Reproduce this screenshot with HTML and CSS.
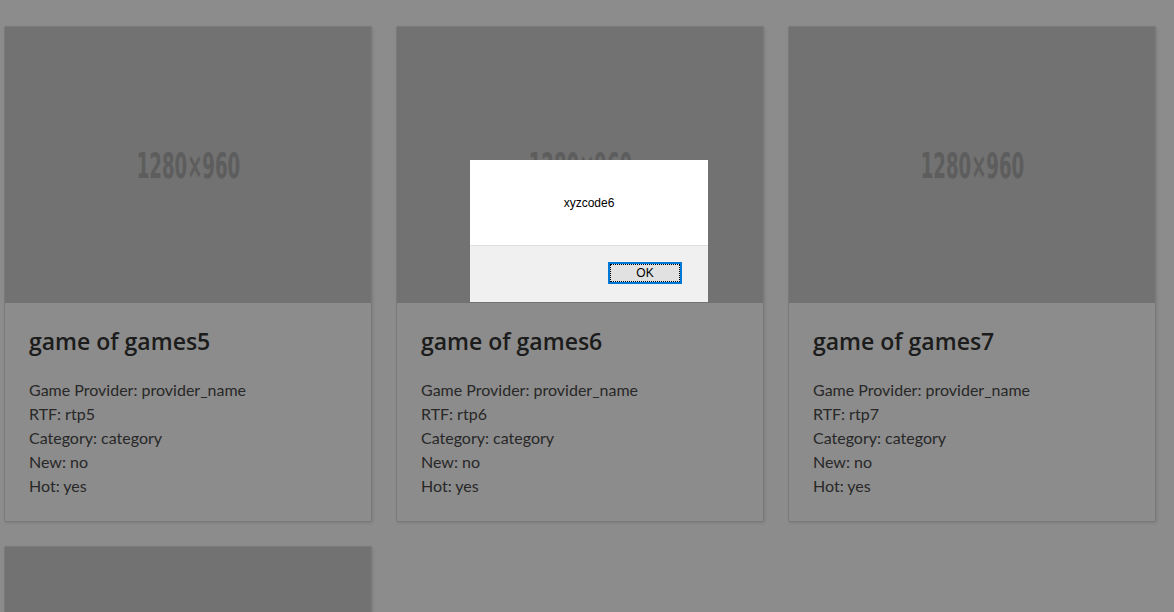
FILE: index.html
```html
<!DOCTYPE html>
<html>
<head>
<meta charset="utf-8">
<link rel="stylesheet" href="styles.css">
</head>
<body>
<div class="grid">
  <div class="card">
    <div class="thumb"><span>1280×960</span></div>
    <div class="body">
      <h5 class="title">game of games5</h5>
      <p>Game Provider: provider_name</p>
      <p>RTF: rtp5</p>
      <p>Category: category</p>
      <p>New: no</p>
      <p>Hot: yes</p>
    </div>
  </div>
  <div class="card">
    <div class="thumb"><span>1280×960</span></div>
    <div class="body">
      <h5 class="title">game of games6</h5>
      <p>Game Provider: provider_name</p>
      <p>RTF: rtp6</p>
      <p>Category: category</p>
      <p>New: no</p>
      <p>Hot: yes</p>
    </div>
  </div>
  <div class="card">
    <div class="thumb"><span>1280×960</span></div>
    <div class="body">
      <h5 class="title">game of games7</h5>
      <p>Game Provider: provider_name</p>
      <p>RTF: rtp7</p>
      <p>Category: category</p>
      <p>New: no</p>
      <p>Hot: yes</p>
    </div>
  </div>
  <div class="card">
    <div class="thumb"></div>
  </div>
</div>
<div class="overlay">
  <div class="dialog">
    <div class="msg">xyzcode6</div>
    <div class="foot"><button class="ok"><span>OK</span></button></div>
  </div>
</div>
</body>
</html>
```
FILE: styles.css
```css
html, body { margin: 0; padding: 0; background: #fff; overflow: hidden; height: 612px; }
body { font-family: Lato, "Open Sans", sans-serif; color: #212529; }
.grid {
  display: grid;
  grid-template-columns: repeat(3, 368px);
  column-gap: 24px;
  row-gap: 24px;
  padding: 26px 0 0 4px;
}
.card {
  border: 1px solid rgba(0,0,0,.125);
  border-radius: 2px;
  box-shadow: 1px 1px 3px rgba(0,0,0,.12);
  background: #fff;
  display: flex;
  flex-direction: column;
}
.thumb {
  height: 276px;
  background: #cfcfcf;
  display: flex;
  align-items: center;
  justify-content: center;
}
.thumb span {
  font-family: "DejaVu Sans Condensed", "DejaVu Sans", sans-serif;
  font-stretch: condensed;
  font-weight: 700;
  font-size: 36px;
  color: #aaaaaa;
  display: inline-block;
  transform: scaleX(0.56);
}
.body { padding: 24px 24px 23px 24px; }
.title {
  font-family: "Open Sans", Lato, sans-serif;
  font-size: 23px;
  font-weight: 600;
  line-height: 29px;
  margin: 0 0 22px 0;
  color: #333;
}
.body p { margin: 0; font-size: 16px; line-height: 24px; color: #4a4a4a; }
.overlay {
  position: fixed; inset: 0;
  background: rgba(0,0,0,.45);
}
.dialog {
  position: absolute;
  left: 470px; top: 160px;
  width: 238px; height: 142px;
  background: #fff;
  display: flex; flex-direction: column;
  font-family: "Liberation Sans", Arial, sans-serif;
}
.msg {
  height: 86px;
  font-size: 12px;
  color: #000;
  text-align: center;
  padding-top: 36px;
  box-sizing: border-box;
  border-bottom: 1px solid #dfdfdf;
}
.foot {
  flex: 1;
  background: #f0f0f0;
  display: flex;
  justify-content: flex-end;
  align-items: flex-start;
  padding: 16px 26px 0 0;
}
.ok {
  width: 74px; height: 22px;
  border: 2px solid #0078d7;
  background: #e1e1e1;
  padding: 0;
  font-family: "Liberation Sans", Arial, sans-serif;
  font-size: 12px;
  color: #000;
  box-sizing: border-box;
}
.ok span {
  display: flex; align-items: center; justify-content: center;
  height: 100%;
  outline: 1px dotted #000;
  outline-offset: -1px;
}
```
